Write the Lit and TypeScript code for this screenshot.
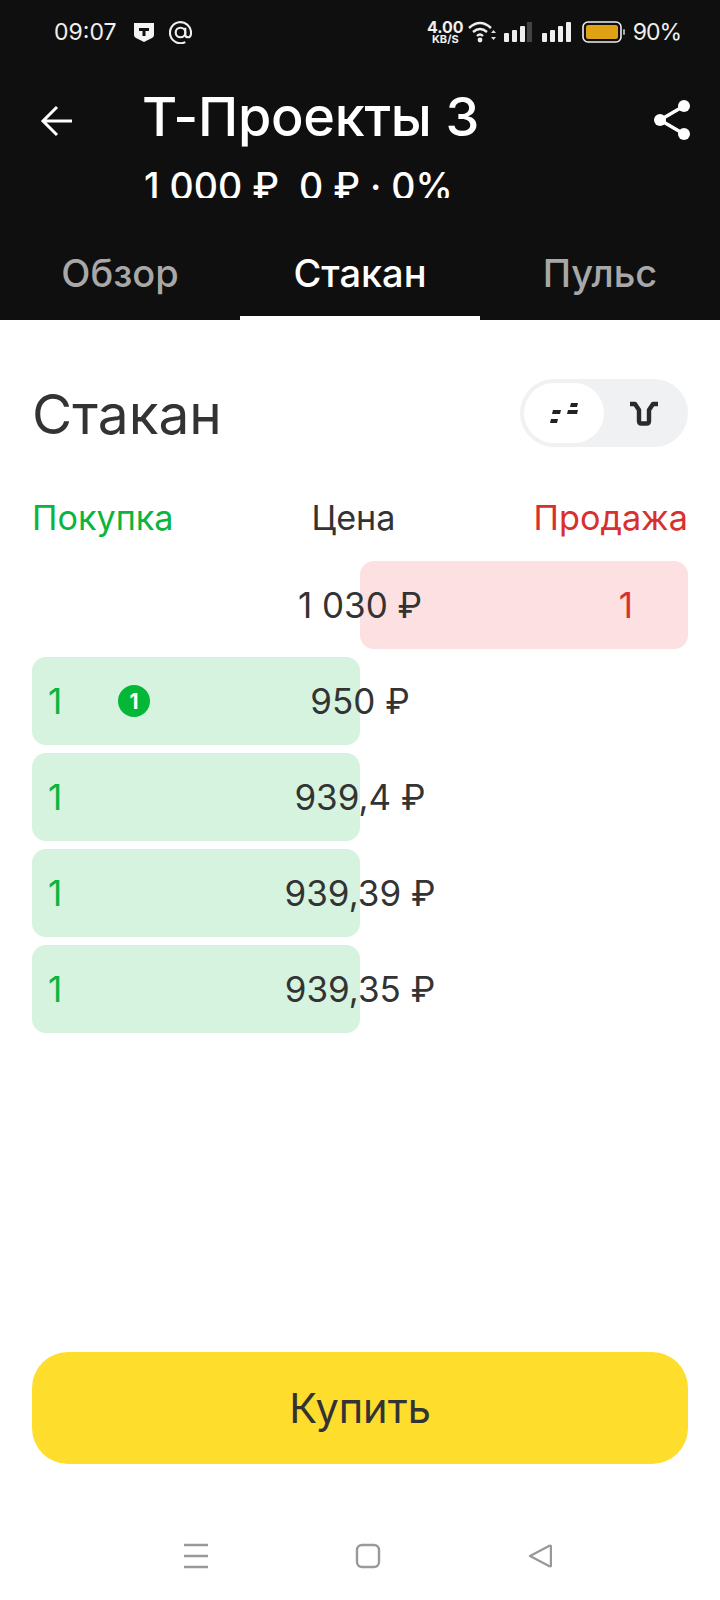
import { LitElement, html, css, svg } from "lit";
import { customElement } from "lit/decorators.js";

@customElement("app-root")
export class AppRoot extends LitElement {
  static styles = css`
    :host { display: block; width: 720px; height: 1600px; background: #fff; font-family: Inter, "Liberation Sans", sans-serif; color: #333; overflow: hidden; }
    .page { height: 1600px; display: flex; flex-direction: column; }
    .head { background: #0f0f10; height: 320px; color: #fff; display: flex; flex-direction: column; flex: none; }
    .status { height: 64px; padding: 0 39px 0 54px; display: flex; align-items: center; justify-content: space-between; font-size: 23px; color: #f0f0f0; }
    .sl, .sr { display: flex; align-items: center; }
    .sl { gap: 15px; }
    .sl svg:first-of-type { margin-left: 3px; }
    .sr { gap: 7px; }
    .pct { letter-spacing: -1px; font-size: 23px; }
    .speed { display: flex; flex-direction: column; align-items: center; font-weight: 700; font-size: 16px; line-height: 14px; margin-right: -3px; }
    .speed small { font-size: 11px; line-height: 11px; }
    .bar { height: 134px; display: flex; padding: 23px 0 0 0; position: relative; }
    .back { width: 144px; flex: none; padding: 18px 0 0 40px; box-sizing: border-box; }
    .t { flex: 1; }
    .title { font-size: 54px; line-height: 60px; font-weight: 500; margin-left: -2px; letter-spacing: -0.3px; }
    .sub { font-size: 37.5px; line-height: 44px; height: 33px; overflow: hidden; padding-top: 8px; margin-top: 10px; white-space: pre; font-weight: 500; }
    .share { padding: 13px 30px 0 0; }
    .tabs { display: grid; grid-template-columns: repeat(3, 240px); flex: 1; }
    .tab { text-align: center; font-size: 38px; line-height: 44px; padding-top: 30px; color: #a8a8a8; box-sizing: border-box; font-weight: 500; }
    .tab.on { color: #fff; border-bottom: 4px solid #fff; }
    .body { flex: 1; padding: 0 32px; display: flex; flex-direction: column; }
    .hrow { display: flex; justify-content: space-between; align-items: center; margin-top: 59px; height: 68px; }
    h1 { margin: 2px 0 0; font-weight: 400; font-size: 55px; color: #333; }
    .toggle { width: 168px; height: 68px; border-radius: 34px; background: #eff1f3; padding: 4px; box-sizing: border-box; display: flex; }
    .seg { width: 80px; height: 60px; border-radius: 30px; display: flex; align-items: center; justify-content: center; }
    .seg.on { background: #fff; }
    .labels { display: flex; justify-content: space-between; font-size: 34.2px; line-height: 40px; margin-top: 51px; }
    .labels .buy { color: #0bb53d; }
    .labels .price { color: #333; }
    .labels .sell { color: #d92f2f; }
    .rows { display: flex; flex-direction: column; gap: 8px; margin-top: 23px; }
    .row { position: relative; height: 88px; display: grid; grid-template-columns: 1fr 1fr; font-size: 35px; }
    .cell { border-radius: 14px; display: flex; align-items: center; padding-left: 16px; }
    .cell.b { background: #d6f3df; color: #0bb53d; }
    .cell.s { background: #fde0e1; color: #d92f2f; padding-left: 0; justify-content: flex-end; padding-right: 55px; }
    .qty { width: 54px; }
    .badge { width: 32px; height: 32px; border-radius: 50%; background: #04b737; color: #fff; font-size: 21px; font-weight: 700; display: flex; align-items: center; justify-content: center; margin-left: 16px; }
    .val { position: absolute; left: 0; right: 0; top: 0; bottom: 0; display: flex; align-items: center; justify-content: center; color: #333; }
    .foot { margin-top: auto; }
    .buybtn { height: 112px; border-radius: 36px; background: #ffdd2d; display: flex; align-items: center; justify-content: center; font-size: 41.5px; color: #333; }
    .nav { height: 136px; display: flex; padding: 79px 0 0 16px; box-sizing: border-box; justify-content: center; }
    .nav svg { display: block; }
  `;

  row(buy: boolean, price: string, badge = false) {
    return html`<div class="row">
      ${buy
        ? html`<div class="cell b"><span class="qty">1</span>${badge ? html`<span class="badge">1</span>` : ""}</div><div></div>`
        : html`<div></div><div class="cell s"><span>1</span></div>`}
      <div class="val">${price}</div>
    </div>`;
  }

  render() {
    return html`<div class="page">
      <div class="head">
        <div class="status">
          <div class="sl">
            <span>09:07</span>
            <svg width="20" height="21" viewBox="0 0 20 21"><path d="M0 1h20v12q0 2-2 3l-8 4-8-4q-2-1-2-3z" fill="#f4f4f4"/><path d="M5 6h10v3h-3.5v5h-3V9H5z" fill="#111"/></svg>
            <svg width="23" height="23" viewBox="0 0 24 24" fill="none" stroke="#f0f0f0" stroke-width="2.2"><circle cx="12" cy="12" r="5"/><path d="M17 7v7q0 3 3 3t3-5A11 11 0 1 0 17 22"/></svg>
          </div>
          <div class="sr">
            <div class="speed"><span>4.00</span><small>KB/S</small></div>
            <svg width="29" height="24" viewBox="0 0 29 24" fill="none" stroke="#eee" stroke-width="2.4"><path d="M1 8q11-10 22 0M5 12q7-6 14 0M9 16q3-3 6 0"/><circle cx="12" cy="20" r="2.4" fill="#eee" stroke="none"/><path d="M23 13h5l-2.5-3zM23 17h5l-2.5 3z" fill="#ddd" stroke="none"/></svg>
            <svg width="28" height="20" viewBox="0 0 28 20" fill="#eee"><rect x="0" y="11" width="5" height="9" rx="1"/><rect x="8" y="8" width="5" height="12" rx="1"/><rect x="16" y="4" width="5" height="16" rx="1"/><rect x="23" y="0" width="5" height="20" fill="#444"/></svg>
            <svg width="29" height="20" viewBox="0 0 29 20" fill="#eee" style="margin-left:3px"><rect x="0" y="11" width="5" height="9" rx="1"/><rect x="8" y="8" width="5" height="12" rx="1"/><rect x="16" y="4" width="5" height="16" rx="1"/><rect x="24" y="0" width="5" height="20" rx="1"/></svg>
            <svg width="44" height="22" viewBox="0 0 44 22" style="margin-left:4px"><rect x="1" y="1" width="38" height="20" rx="5" fill="none" stroke="#eee" stroke-width="1.6"/><rect x="4" y="4" width="32" height="14" rx="2.5" fill="#e0a215"/><rect x="41" y="8" width="2" height="6" rx="1" fill="#aaa"/></svg>
            <span class="pct">90%</span>
          </div>
        </div>
        <div class="bar">
          <div class="back"><svg width="32" height="32" viewBox="0 0 32 32" fill="none" stroke="#fff" stroke-width="3"><path d="M32 16H3M17 2L3 16l14 14"/></svg></div>
          <div class="t">
            <div class="title">Т-Проекты 3</div>
            <div class="sub">1 000 ₽  0 ₽ · 0%</div>
          </div>
          <div class="share"><svg width="36" height="40" viewBox="0 0 36 40" fill="#fff"><circle cx="6" cy="20" r="6"/><circle cx="30" cy="6" r="6"/><circle cx="30" cy="34" r="6"/><path d="M6 20L30 6M6 20l24 14" stroke="#fff" stroke-width="3.4"/></svg></div>
        </div>
        <div class="tabs">
          <div class="tab">Обзор</div>
          <div class="tab on">Стакан</div>
          <div class="tab">Пульс</div>
        </div>
      </div>
      <div class="body">
        <div class="hrow">
          <h1>Стакан</h1>
          <div class="toggle">
            <div class="seg on"><svg width="28" height="20" viewBox="0 0 28 20" fill="#222"><path d="M21 0h7l-1 4h-7zM18 7h10l-1 4H17zM3 7h8l-1 4H2zM1 16h7l-1 4H0z"/></svg></div>
            <div class="seg"><svg width="28" height="25" viewBox="0 0 28 25" fill="none" stroke="#2a2a2a" stroke-width="4.4" stroke-linejoin="round"><path d="M0 3h5l4 6v11q0 2.500 2.500 2.500h5q2.500 0 2.500-2.500V9l4-6h5"/></svg></div>
          </div>
        </div>
        <div class="labels"><span class="buy">Покупка</span><span class="price">Цена</span><span class="sell">Продажа</span></div>
        <div class="rows">
          ${this.row(false, "1 030 ₽")}
          ${this.row(true, "950 ₽", true)}
          ${this.row(true, "939,4 ₽")}
          ${this.row(true, "939,39 ₽")}
          ${this.row(true, "939,35 ₽")}
        </div>
        <div class="foot"><div class="buybtn">Купить</div></div>
      </div>
      <div class="nav">
        <svg width="368" height="26" viewBox="0 0 368 26" fill="none" stroke="#999" stroke-width="2.4">
          ${svg`<path d="M0 2h24M0 13h24M0 24h24"/>
          <rect x="173" y="2" width="22" height="22" rx="5"/>
          <path d="M346 13l19-10q2-1 2 1v18q0 2-2 1z" stroke-linejoin="round"/>`}
        </svg>
      </div>
    </div>`;
  }
}
